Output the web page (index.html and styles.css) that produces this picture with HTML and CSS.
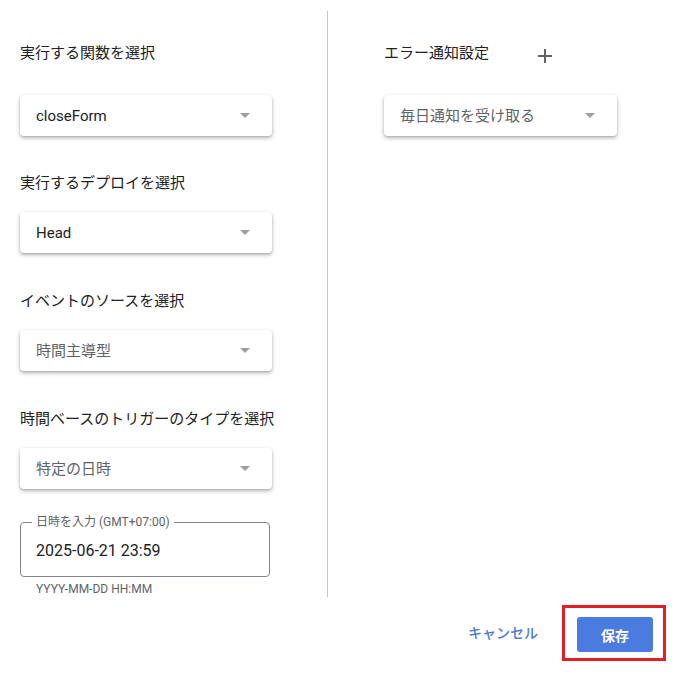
FILE: index.html
```html
<!DOCTYPE html>
<html lang="ja">
<head>
<meta charset="utf-8">
<title>トリガーを追加</title>
<link rel="stylesheet" href="styles.css">
</head>
<body>
<div class="dialog">
  <div class="main">
    <div class="col col-left">
      <div class="field first">
        <div class="field-label">実行する関数を選択</div>
        <div class="select wide"><span class="select-text">closeForm</span><span class="arrow"></span></div>
      </div>
      <div class="field">
        <div class="field-label">実行するデプロイを選択</div>
        <div class="select wide"><span class="select-text">Head</span><span class="arrow"></span></div>
      </div>
      <div class="field">
        <div class="field-label">イベントのソースを選択</div>
        <div class="select wide"><span class="select-text muted">時間主導型</span><span class="arrow"></span></div>
      </div>
      <div class="field">
        <div class="field-label">時間ベースのトリガーのタイプを選択</div>
        <div class="select wide"><span class="select-text muted">特定の日時</span><span class="arrow"></span></div>
      </div>
      <fieldset class="textfield">
        <legend class="tf-label">日時を入力 (GMT+07:00)</legend>
        <div class="tf-value">2025-06-21 23:59</div>
      </fieldset>
      <div class="helper">YYYY-MM-DD HH:MM</div>
    </div>
    <div class="col col-right">
      <div class="field first">
        <div class="field-label row">
          <span>エラー通知設定</span>
          <svg class="plus" width="14" height="14" viewBox="0 0 14 14" aria-hidden="true"><path d="M7 0v14M0 7h14" stroke="#5f6368" stroke-width="2" fill="none"/></svg>
        </div>
        <div class="select narrow"><span class="select-text muted">毎日通知を受け取る</span><span class="arrow"></span></div>
      </div>
    </div>
  </div>
  <div class="footer">
    <span class="cancel">キャンセル</span>
    <div class="highlight">
      <button class="save">保存</button>
    </div>
  </div>
</div>
</body>
</html>
```
FILE: styles.css
```css
html, body {
  margin: 0;
  padding: 0;
  background: #ffffff;
}
body {
  font-family: Roboto, "Noto Sans CJK JP", sans-serif;
  color: #202124;
  width: 678px;
  height: 682px;
  overflow: hidden;
}
.dialog {
  width: 678px;
}
.main {
  display: flex;
  padding-top: 11px;
  height: 586px;
}
.col {
  box-sizing: border-box;
  height: 586px;
}
.col-left {
  width: 328px;
  padding-left: 20px;
  border-right: 1px solid #c6c6c6;
}
.col-right {
  padding-left: 56px;
}
.field {
  margin-top: 37px;
}
.field + .field + .field {
  margin-top: 38px;
}
.field.first {
  margin-top: 32px;
}
.field-label {
  font-size: 15px;
  line-height: 20px;
  height: 20px;
  color: #202124;
  margin-bottom: 19px;
  white-space: nowrap;
}
.field.first .field-label {
  margin-bottom: 32px;
}
.field-label.row {
  display: flex;
  align-items: center;
  gap: 49px;
}
.plus {
  display: block;
  margin-top: 6px;
}
.select {
  box-sizing: border-box;
  height: 41px;
  display: flex;
  align-items: center;
  justify-content: space-between;
  padding: 0 22px 0 16px;
  background: #ffffff;
  border-radius: 4px;
  box-shadow: 0 2px 4px rgba(0, 0, 0, 0.28), 0 1px 2px rgba(0, 0, 0, 0.12);
}
.select.wide {
  width: 252px;
}
.select.narrow {
  width: 233px;
}
.select-text {
  font-size: 15px;
  line-height: 20px;
  color: #202124;
}
.select-text.muted {
  color: #5f6368;
}
.arrow {
  width: 0;
  height: 0;
  border-left: 5px solid transparent;
  border-right: 5px solid transparent;
  border-top: 5px solid #9e9e9e;
}
.textfield {
  box-sizing: border-box;
  width: 250px;
  margin: 26px 0 0 0;
  padding: 12px 11px 15px 11px;
  border: 1px solid #80868b;
  border-radius: 4px;
  min-inline-size: 0;
}
.tf-label {
  font-size: 12px;
  line-height: 14px;
  padding: 0 4px;
  color: #5f6368;
}
.tf-value {
  font-size: 16px;
  line-height: 20px;
  padding-left: 4px;
  color: #202124;
}
.helper {
  margin-top: 4px;
  padding-left: 16px;
  font-size: 12px;
  line-height: 16px;
  color: #5f6368;
}
.footer {
  display: flex;
  justify-content: flex-end;
  align-items: center;
  margin-top: 8px;
  padding-right: 12px;
  gap: 24px;
}
.cancel {
  font-size: 14px;
  font-weight: 500;
  color: #4a78d9;
  line-height: 20px;
}
.highlight {
  border: 3px solid #e31e24;
  padding: 9px 10px 6px 12px;
}
.save {
  display: block;
  width: 76px;
  height: 35px;
  border: none;
  border-radius: 3px;
  background: #4a7be0;
  color: #ffffff;
  font-family: Roboto, "Noto Sans CJK JP", sans-serif;
  font-size: 14px;
  font-weight: 700;
  padding: 0;
}
```
